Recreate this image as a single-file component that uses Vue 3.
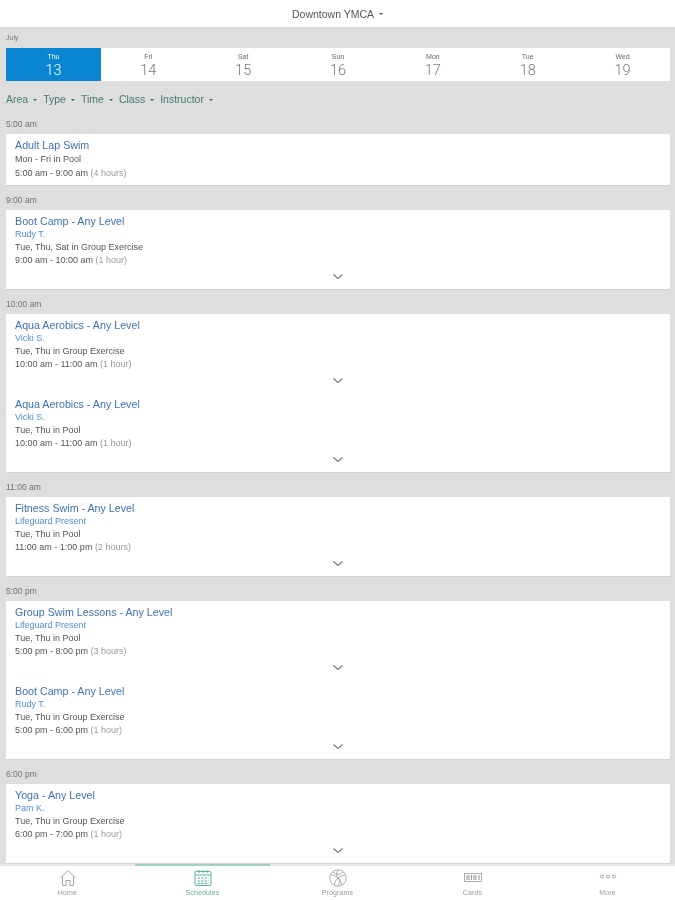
<template>
  <div class="page">
    <header class="top-bar">
      <span>Downtown YMCA</span>
      <i class="caret dark"></i>
    </header>

    <main class="content">
      <div class="month">July</div>
      <div class="week">
        <div v-for="d in days" :key="d.num" class="day" :class="{ active: d.active }">
          <span class="day-name">{{ d.name }}</span>
          <span class="day-num">{{ d.num }}</span>
        </div>
      </div>

      <div class="filters">
        <span v-for="f in filters" :key="f" class="filter">{{ f }}<i class="caret"></i></span>
      </div>

      <section v-for="s in sections" :key="s.time" class="section">
        <div class="time-label">{{ s.time }}</div>
        <div class="card">
          <div v-for="(c, i) in s.classes" :key="i" class="row" :class="{ short: !c.teacher }">
            <div class="title">{{ c.title }}</div>
            <div v-if="c.teacher" class="teacher">{{ c.teacher }}</div>
            <div class="line">{{ c.where }}</div>
            <div class="line">{{ c.hours }} <span class="duration">({{ c.length }})</span></div>
            <svg v-if="c.teacher" class="chevron" width="12" height="7" viewBox="0 0 12 7">
              <path d="M1.5 1.5L6 5.5l4.5-4" fill="none" stroke="#777" stroke-width="1.1" />
            </svg>
          </div>
        </div>
      </section>
    </main>

    <nav class="tabs">
      <div class="tab">
        <svg width="18" height="18" viewBox="0 0 18 18" fill="none" stroke="#999" stroke-width="0.9">
          <path d="M1.5 9L9 1.5 16.5 9M3.5 7.5V16.5H7V11.5H11V16.5H14.5V7.5" />
        </svg>
        <span>Home</span>
      </div>
      <div class="tab selected">
        <svg width="18" height="18" viewBox="0 0 18 18" fill="none" stroke="#57b79b" stroke-width="1">
          <rect x="1" y="2.5" width="16" height="14" rx="1" />
          <path d="M1 6h16M5 1v3M9 1v3M13 1v3" />
          <path d="M3.5 9h11M3.5 12h11M3.5 14.5h11" stroke-dasharray="2.5 1" />
        </svg>
        <span>Schedules</span>
      </div>
      <div class="tab">
        <svg width="18" height="18" viewBox="0 0 18 18" fill="none" stroke="#999" stroke-width="0.8">
          <circle cx="9" cy="9" r="8.2" />
          <path d="M2 6c4 0 9 3 11 10M16 6c-4 0-9 3-11 10M9 1c-2 3-2 6 0 8s2 5 0 8M4 3c2 3 8 3 10 0" />
        </svg>
        <span>Programs</span>
      </div>
      <div class="tab">
        <svg width="18" height="18" viewBox="0 0 18 18" fill="none" stroke="#999" stroke-width="0.8">
          <rect x="0.5" y="4.5" width="17" height="8" />
          <path d="M3 6v5M5 6v5M7.5 6v5M10 6v5M12 6v5M15 6v5" stroke-width="1.1" />
        </svg>
        <span>Cards</span>
      </div>
      <div class="tab">
        <svg width="18" height="18" viewBox="0 0 18 18" fill="none" stroke="#999" stroke-width="0.8">
          <circle cx="3" cy="7.5" r="1.6" />
          <circle cx="9" cy="7.5" r="1.6" />
          <circle cx="15" cy="7.5" r="1.6" />
        </svg>
        <span>More</span>
      </div>
    </nav>
  </div>
</template>

<script setup>
const days = [
  { name: 'Thu', num: 13, active: true },
  { name: 'Fri', num: 14 },
  { name: 'Sat', num: 15 },
  { name: 'Sun', num: 16 },
  { name: 'Mon', num: 17 },
  { name: 'Tue', num: 18 },
  { name: 'Wed', num: 19 }
]

const filters = ['Area', 'Type', 'Time', 'Class', 'Instructor']

const sections = [
  {
    time: '5:00 am',
    classes: [
      { title: 'Adult Lap Swim', where: 'Mon - Fri in Pool', hours: '5:00 am - 9:00 am', length: '4 hours' }
    ]
  },
  {
    time: '9:00 am',
    classes: [
      { title: 'Boot Camp - Any Level', teacher: 'Rudy T.', where: 'Tue, Thu, Sat in Group Exercise', hours: '9:00 am - 10:00 am', length: '1 hour' }
    ]
  },
  {
    time: '10:00 am',
    classes: [
      { title: 'Aqua Aerobics - Any Level', teacher: 'Vicki S.', where: 'Tue, Thu in Group Exercise', hours: '10:00 am - 11:00 am', length: '1 hour' },
      { title: 'Aqua Aerobics - Any Level', teacher: 'Vicki S.', where: 'Tue, Thu in Pool', hours: '10:00 am - 11:00 am', length: '1 hour' }
    ]
  },
  {
    time: '11:00 am',
    classes: [
      { title: 'Fitness Swim - Any Level', teacher: 'Lifeguard Present', where: 'Tue, Thu in Pool', hours: '11:00 am - 1:00 pm', length: '2 hours' }
    ]
  },
  {
    time: '5:00 pm',
    classes: [
      { title: 'Group Swim Lessons - Any Level', teacher: 'Lifeguard Present', where: 'Tue, Thu in Pool', hours: '5:00 pm - 8:00 pm', length: '3 hours' },
      { title: 'Boot Camp - Any Level', teacher: 'Rudy T.', where: 'Tue, Thu in Group Exercise', hours: '5:00 pm - 6:00 pm', length: '1 hour' }
    ]
  },
  {
    time: '6:00 pm',
    classes: [
      { title: 'Yoga - Any Level', teacher: 'Pam K.', where: 'Tue, Thu in Group Exercise', hours: '6:00 pm - 7:00 pm', length: '1 hour' }
    ]
  }
]
</script>

<style scoped>
.page {
  width: 675px;
  height: 900px;
  display: flex;
  flex-direction: column;
  overflow: hidden;
  background: #dedede;
  font-family: "Liberation Sans", Arial, sans-serif;
  filter: blur(0.35px);
}

.top-bar {
  height: 27px;
  flex-shrink: 0;
  background: #fff;
  display: flex;
  align-items: center;
  justify-content: center;
  gap: 5px;
  font-size: 10.5px;
  color: #555;
}

.caret {
  display: inline-block;
  width: 0;
  height: 0;
  margin-left: 5px;
  border-left: 2px solid transparent;
  border-right: 2px solid transparent;
  border-top: 2px solid #2f6f62;
  vertical-align: middle;
}

.caret.dark {
  margin-left: 0;
  border-top-color: #555;
}

.content {
  flex: 1;
  min-height: 0;
  overflow: hidden;
  padding: 0 5px 0 6px;
}

.month {
  height: 21px;
  line-height: 21px;
  font-size: 7px;
  color: #777;
}

.week {
  display: flex;
  height: 33px;
  background: #fff;
}

.day {
  flex: 1;
  display: flex;
  flex-direction: column;
  align-items: center;
  color: #777;
  padding-top: 4px;
}

.day.active {
  background: #0a85d1;
  color: #fff;
}

.day-name {
  font-size: 7px;
  line-height: 9px;
  color: #666;
}

.day.active .day-name {
  color: #fff;
}

.day-num {
  font-family: Roboto, "Liberation Sans", sans-serif;
  font-size: 14.5px;
  font-weight: 300;
  line-height: 16px;
  margin-top: 2px;
}

.filters {
  display: flex;
  gap: 6px;
  height: 28px;
  padding-top: 12px;
  box-sizing: border-box;
  font-size: 10.5px;
  line-height: 12px;
  color: #3f7c70;
}

.time-label {
  height: 25px;
  box-sizing: border-box;
  padding-top: 10px;
  line-height: 11px;
  font-size: 8.5px;
  color: #707070;
}

.card {
  background: #fff;
  box-shadow: 0 1px 0 #d2d2d2;
}

.row {
  position: relative;
  height: 79px;
  box-sizing: border-box;
  padding: 5px 9px 0;
}

.row.short {
  height: 51px;
}

.title {
  font-size: 10.7px;
  line-height: 13px;
  color: #3d72b4;
}

.teacher {
  font-size: 9px;
  line-height: 13px;
  color: #4a90d9;
}

.line {
  font-size: 9px;
  line-height: 13px;
  color: #555;
}

.short .line {
  line-height: 14px;
}

.duration {
  color: #999;
}

.chevron {
  position: absolute;
  left: 326px;
  bottom: 9px;
}

.tabs {
  height: 36px;
  flex-shrink: 0;
  display: flex;
  background: #fff;
  border-top: 2px solid #e8e8e8;
  box-sizing: border-box;
}

.tab {
  flex: 1;
  display: flex;
  flex-direction: column;
  align-items: center;
  padding-top: 3px;
  font-size: 7px;
  letter-spacing: 0.15px;
  color: #999;
  position: relative;
}

.tab span {
  line-height: 8px;
  margin-top: 2px;
}

.tab.selected {
  color: #57b79b;
}

.tab.selected::before {
  content: "";
  position: absolute;
  left: 0;
  right: 0;
  top: -2px;
  height: 2px;
  background: #9bd3c0;
}
</style>
